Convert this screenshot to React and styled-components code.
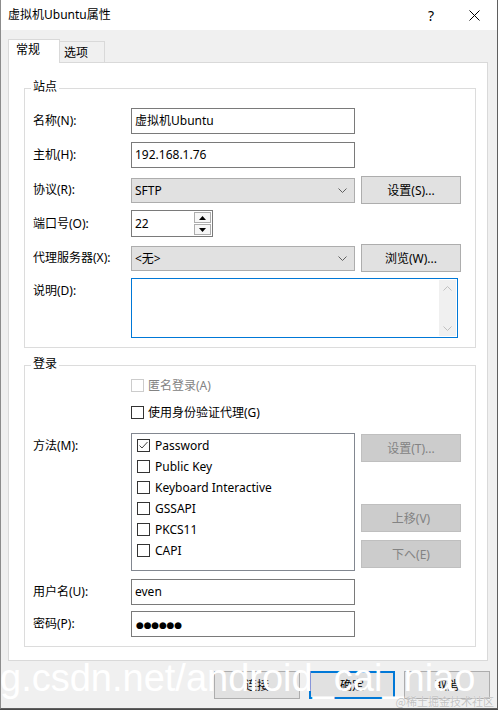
import React from "react";
import styled, { createGlobalStyle, css } from "styled-components";

const GlobalStyle = createGlobalStyle`
  html, body {
    margin: 0;
    padding: 0;
  }
  body {
    background: #4a4a4a;
    font-family: "Noto Sans", "Noto Sans CJK SC", sans-serif;
    font-size: 12px;
    color: #000;
  }
`;

const Window = styled.div`
  position: relative;
  width: 498px;
  height: 709px;
  box-sizing: border-box;
  border-left: 1px solid #8c8c8c;
  border-right: 1px solid #5f5f5f;
  border-bottom: 1px solid #5f5f5f;
  background: #f0f0f0;
  overflow: hidden;
  display: flex;
  flex-direction: column;
`;

const TitleBar = styled.div`
  height: 30px;
  flex: none;
  background: #fff;
  display: flex;
  align-items: center;
  padding-left: 7px;
`;

const Title = styled.div`
  flex: 1;
  line-height: 16px;
`;

const CaptionButton = styled.div`
  width: 46px;
  height: 30px;
  display: flex;
  align-items: center;
  justify-content: center;
  font-size: 14px;
  padding-left: ${(p) => p.$shift || 0}px;
  box-sizing: border-box;
`;

const Body = styled.div`
  flex: 1;
  padding: 9px 9px 0 7px;
  display: flex;
  flex-direction: column;
`;

const TabRow = styled.div`
  display: flex;
  align-items: flex-end;
  height: 24px;
  margin-bottom: -1px;
  position: relative;
  z-index: 1;
`;

const Tab = styled.div`
  box-sizing: border-box;
  border: 1px solid #d9d9d9;
  border-bottom: none;
  line-height: 20px;
  ${(p) =>
    p.$active
      ? css`
          width: 52px;
          height: 24px;
          background: #fff;
          padding-left: 7px;
        `
      : css`
          width: 45px;
          height: 21px;
          margin-bottom: 1px;
          border-left: none;
          background: #f0f0f0;
          padding-left: 4px;
          line-height: 21px;
        `}
`;

const Panel = styled.div`
  box-sizing: border-box;
  height: 599px;
  background: #fff;
  border: 1px solid #d9d9d9;
  padding: 25px 11px 0 15px;
`;

const Group = styled.div`
  position: relative;
  width: 452px;
  box-sizing: border-box;
  border: 1px solid #dcdcdc;
  padding: ${(p) => p.$pad};
  margin-top: ${(p) => p.$top || 0}px;
  display: flex;
  flex-direction: column;
`;

const Legend = styled.span`
  position: absolute;
  top: -10px;
  left: 6px;
  padding: 0 2px;
  background: #fff;
  line-height: 16px;
`;

const FieldRow = styled.div`
  display: grid;
  grid-template-columns: 92px 224px 100px;
  column-gap: 6px;
  height: ${(p) => (p.$top ? "auto" : "26px")};
  align-items: ${(p) => (p.$top ? "start" : "center")};
  margin-top: ${(p) => p.$gap || 0}px;
`;

const Label = styled.span`
  line-height: 26px;
  white-space: nowrap;
`;

const TextBox = styled.div`
  box-sizing: border-box;
  height: 26px;
  border: 1px solid #7a7a7a;
  background: #fff;
  padding: 0 3px;
  line-height: 24px;
  white-space: nowrap;
`;

const Dots = styled.span`
  font-family: "DejaVu Sans", sans-serif;
  font-size: 9px;
  letter-spacing: -0.2px;
  padding-left: 1px;
`;

const Combo = styled.div`
  box-sizing: border-box;
  height: 25px;
  border: 1px solid #adadad;
  background: #e1e1e1;
  padding: 0 7px 0 3px;
  display: flex;
  align-items: center;
  justify-content: space-between;
`;

const Button = styled.div`
  box-sizing: border-box;
  width: ${(p) => p.$w || 100}px;
  height: 28px;
  border: ${(p) => (p.$focus ? "2px solid #0078d7" : "1px solid #adadad")};
  background: ${(p) => (p.$disabled ? "#cccccc" : "#e1e1e1")};
  color: ${(p) => (p.$disabled ? "#838383" : "#000")};
  border-color: ${(p) => (p.$disabled ? "#bfbfbf" : p.$focus ? "#0078d7" : "#adadad")};
  display: flex;
  align-items: center;
  justify-content: center;
  margin-top: ${(p) => p.$gap || 0}px;
`;

const Spin = styled.div`
  justify-self: start;
  align-self: start;
  box-sizing: border-box;
  width: 82px;
  height: 27px;
  border: 1px solid #7a7a7a;
  background: #fff;
  display: flex;
`;

const SpinText = styled.div`
  flex: 1;
  padding-left: 3px;
  line-height: 25px;
`;

const SpinButtons = styled.div`
  width: 17px;
  display: flex;
  flex-direction: column;
  gap: 1px;
  padding: 1px 1px 1px 0;
`;

const SpinButton = styled.div`
  flex: 1;
  border: 1px solid #adadad;
  background: #f7f7f7;
  display: flex;
  align-items: center;
  justify-content: center;
`;

const Memo = styled.div`
  grid-column: 2 / 4;
  box-sizing: border-box;
  width: 327px;
  height: 60px;
  border: 1px solid #0078d7;
  background: #fff;
  display: flex;
  justify-content: flex-end;
  padding: 1px;
`;

const ScrollBar = styled.div`
  width: 17px;
  background: #f0f0f0;
  display: flex;
  flex-direction: column;
  justify-content: space-between;
  align-items: center;
  padding: 6px 0 5px;
`;

const CheckRow = styled.div`
  display: flex;
  align-items: center;
  height: 16px;
  padding-left: 98px;
  margin-top: ${(p) => p.$gap || 0}px;
  color: ${(p) => (p.$disabled ? "#838383" : "#000")};
`;

const Box = styled.span`
  box-sizing: border-box;
  width: 13px;
  height: 13px;
  flex: none;
  border: 1px solid ${(p) => (p.$disabled ? "#cccccc" : "#333")};
  background: #fff;
  margin-right: ${(p) => p.$space || 4}px;
  display: flex;
  align-items: center;
  justify-content: center;
`;

const MethodList = styled.div`
  box-sizing: border-box;
  height: 138px;
  border: 1px solid #828790;
  background: #fff;
  padding: 1px 0 0 5px;
`;

const ListItem = styled.div`
  display: flex;
  align-items: center;
  height: 21px;
  white-space: nowrap;
`;

const SideButtons = styled.div`
  display: flex;
  flex-direction: column;
  padding-top: 1px;
`;

const Footer = styled.div`
  display: flex;
  justify-content: flex-end;
  gap: 9px;
  margin: 10px -2px 0 0;
`;

const Watermark = styled.div`
  position: absolute;
  left: -1px;
  top: 659px;
  font-family: "Liberation Sans", Arial, sans-serif;
  font-size: 38px;
  line-height: 38px;
  color: #fff;
  white-space: nowrap;
  pointer-events: none;
`;

const Credit = styled.div`
  position: absolute;
  right: 3px;
  top: 694px;
  font-family: "Noto Sans CJK SC", sans-serif;
  font-size: 11px;
  line-height: 14px;
  color: #c2c2c2;
  text-shadow: 0 0 1px #fff;
  white-space: nowrap;
`;

const Chevron = ({ up, color = "#606060" }) => (
  <svg width="9" height="5" viewBox="0 0 9 5">
    <path
      d={up ? "M0.5 4.5 L4.5 0.5 L8.5 4.5" : "M0.5 0.5 L4.5 4.5 L8.5 0.5"}
      fill="none"
      stroke={color}
      strokeWidth="1"
    />
  </svg>
);

const Triangle = ({ up }) => (
  <svg width="7" height="4" viewBox="0 0 7 4">
    <path d={up ? "M0 4 L3.5 0 L7 4 Z" : "M0 0 L3.5 4 L7 0 Z"} fill="#000" />
  </svg>
);

const Check = ({ checked, disabled, space }) => (
  <Box $disabled={disabled} $space={space}>
    {checked && (
      <svg width="11" height="11" viewBox="0 0 11 11">
        <path d="M1.5 5.5 L4 8 L9.5 2" fill="none" stroke="#444" strokeWidth="1" />
      </svg>
    )}
  </Box>
);

const methods = [
  { name: "Password", checked: true },
  { name: "Public Key" },
  { name: "Keyboard Interactive" },
  { name: "GSSAPI" },
  { name: "PKCS11" },
  { name: "CAPI" },
];

export default function App() {
  return (
    <>
      <GlobalStyle />
      <Window>
        <TitleBar>
          <Title>虚拟机Ubuntu属性</Title>
          <CaptionButton $shift={6}>?</CaptionButton>
          <CaptionButton>
            <svg width="11" height="11" viewBox="0 0 11 11">
              <path d="M0.5 0.5 L10.5 10.5 M10.5 0.5 L0.5 10.5" stroke="#000" strokeWidth="1" />
            </svg>
          </CaptionButton>
        </TitleBar>

        <Body>
          <TabRow>
            <Tab $active>常规</Tab>
            <Tab>选项</Tab>
          </TabRow>
          <Panel>
            <Group $pad="19px 0 9px 8px">
              <Legend>站点</Legend>
              <FieldRow>
                <Label>名称(N):</Label>
                <TextBox>虚拟机Ubuntu</TextBox>
              </FieldRow>
              <FieldRow $gap={8}>
                <Label>主机(H):</Label>
                <TextBox>192.168.1.76</TextBox>
              </FieldRow>
              <FieldRow $gap={8}>
                <Label>协议(R):</Label>
                <Combo>
                  SFTP
                  <Chevron />
                </Combo>
                <Button>设置(S)...</Button>
              </FieldRow>
              <FieldRow $gap={8}>
                <Label>端口号(O):</Label>
                <Spin>
                  <SpinText>22</SpinText>
                  <SpinButtons>
                    <SpinButton>
                      <Triangle up />
                    </SpinButton>
                    <SpinButton>
                      <Triangle />
                    </SpinButton>
                  </SpinButtons>
                </Spin>
              </FieldRow>
              <FieldRow $gap={8}>
                <Label>代理服务器(X):</Label>
                <Combo>
                  &lt;无&gt;
                  <Chevron />
                </Combo>
                <Button>浏览(W)...</Button>
              </FieldRow>
              <FieldRow $gap={8} $top>
                <Label>说明(D):</Label>
                <Memo>
                  <ScrollBar>
                    <Chevron up color="#c0c0c0" />
                    <Chevron color="#c0c0c0" />
                  </ScrollBar>
                </Memo>
              </FieldRow>
            </Group>

            <Group $pad="11px 0 9px 8px" $top={17}>
              <Legend>登录</Legend>
              <CheckRow $disabled>
                <Check disabled />
                匿名登录(A)
              </CheckRow>
              <CheckRow $gap={11}>
                <Check />
                使用身份验证代理(G)
              </CheckRow>
              <FieldRow $gap={13} $top>
                <Label>方法(M):</Label>
                <MethodList>
                  {methods.map((m) => (
                    <ListItem key={m.name}>
                      <Check checked={m.checked} space={5} />
                      {m.name}
                    </ListItem>
                  ))}
                </MethodList>
                <SideButtons>
                  <Button $disabled>设置(T)...</Button>
                  <Button $disabled $gap={42}>
                    上移(V)
                  </Button>
                  <Button $disabled $gap={8}>
                    下へ(E)
                  </Button>
                </SideButtons>
              </FieldRow>
              <FieldRow $gap={8}>
                <Label>用户名(U):</Label>
                <TextBox>even</TextBox>
              </FieldRow>
              <FieldRow $gap={6}>
                <Label>密码(P):</Label>
                <TextBox>
                  <Dots>●●●●●●</Dots>
                </TextBox>
              </FieldRow>
            </Group>
          </Panel>

          <Footer>
            <Button $w={86}>连接</Button>
            <Button $w={86} $focus>
              确定
            </Button>
            <Button $w={86}>取消</Button>
          </Footer>
        </Body>

        <Watermark>g.csdn.net/android_cai_niao</Watermark>
        <Credit>@稀土掘金技术社区</Credit>
      </Window>
    </>
  );
}
